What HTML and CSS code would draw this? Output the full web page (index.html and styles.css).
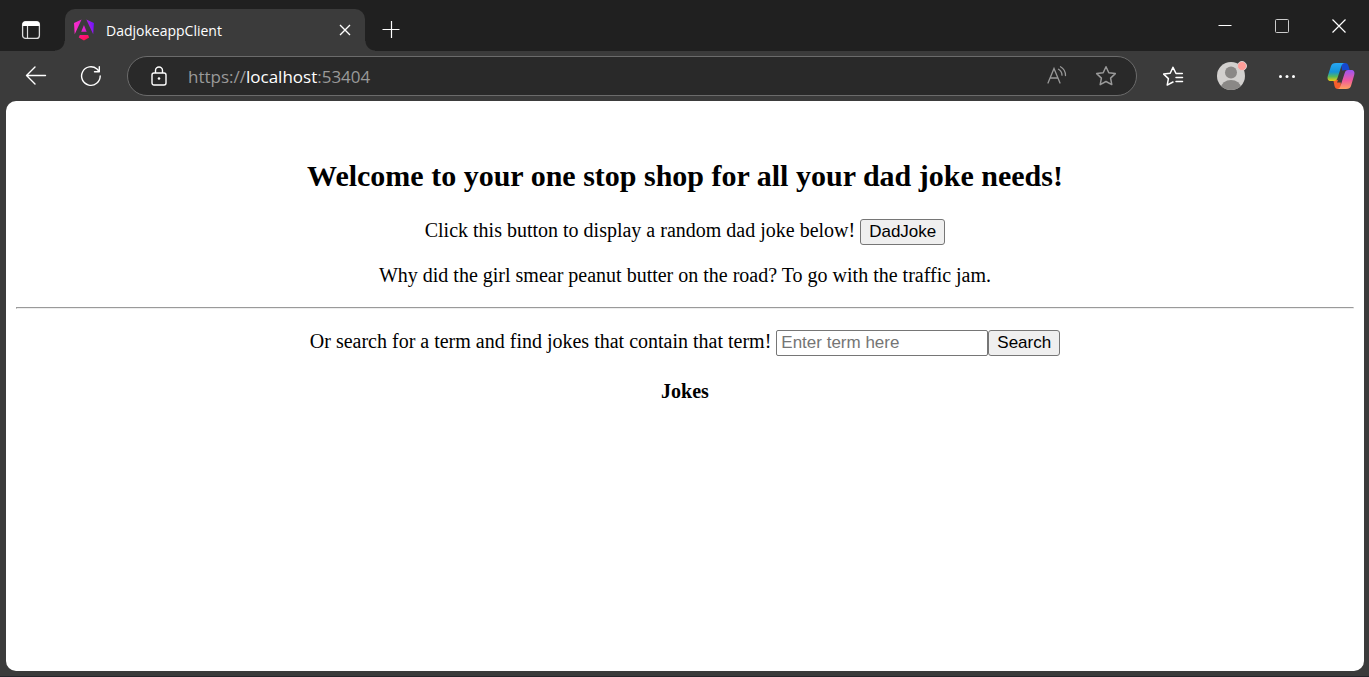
FILE: index.html
```html
<!DOCTYPE html>
<html lang="en">
<head>
<meta charset="utf-8">
<title>DadjokeappClient</title>
<link rel="stylesheet" href="styles.css">
</head>
<body>
<div class="window">
  <header class="tab-strip">
    <button class="icon-button tab-actions" aria-label="Tab actions">
      <svg width="20" height="20" viewBox="0 0 20 20" fill="none" stroke="#ddd"><rect x="1.6" y="1.6" width="16.8" height="16.8" rx="3" stroke-width="1.3"/><path d="M1.500 6V4.500a3 3 0 0 1 3-3h11a3 3 0 0 1 3 3V6z" fill="#fff" stroke="none"/><path d="M6.500 6v12" stroke-width="1.200"/></svg>
    </button>
    <div class="tab">
      <svg class="favicon" width="20" height="22" viewBox="0 0 223 236"><defs><linearGradient id="ng" gradientUnits="userSpaceOnUse" x1="0" y1="120" x2="223" y2="60"><stop offset="0" stop-color="#ff30c8"/><stop offset=".5" stop-color="#e01fd0"/><stop offset="1" stop-color="#6a14ff"/></linearGradient><linearGradient id="ngb" x1="0" y1="0" x2="1" y2="1"><stop offset="0" stop-color="#ff1494"/><stop offset="1" stop-color="#ff1040"/></linearGradient></defs><path fill="url(#ng)" d="m222.077 39.192-8.019 125.923L137.387 0l84.690 39.192ZM111.039 62.675l30.357 73.803H80.681l30.358-73.803ZM7.937 165.115 0 39.192 84.690 0 7.937 165.115Z"/><path fill="url(#ngb)" d="m168.972 202.017-57.933 33.056-57.934-33.056 11.783-28.556h92.301z"/></svg>
      <span class="tab-title">DadjokeappClient</span>
      <button class="icon-button" aria-label="Close tab"><svg width="12" height="12" viewBox="0 0 12 12" fill="none" stroke="#fff" stroke-width="1.400"><path d="m1 1 10 10M11 1 1 11"/></svg></button>
    </div>
    <button class="icon-button new-tab" aria-label="New tab"><svg width="18" height="18" viewBox="0 0 18 18" stroke="#fff" stroke-width="1.200"><path d="M0.500 8.500h17M9.500 0v17"/></svg></button>
    <div class="window-controls">
      <button class="icon-button" aria-label="Minimize"><svg width="14" height="14" viewBox="0 0 14 14" stroke="#fff"><path d="M0.500 6.500h13"/></svg></button>
      <button class="icon-button" aria-label="Maximize"><svg width="14" height="14" viewBox="0 0 14 14" fill="none" stroke="#ccc"><rect x="0.500" y="0.500" width="13" height="13" rx="1"/></svg></button>
      <button class="icon-button" aria-label="Close"><svg width="14" height="14" viewBox="0 0 14 14" stroke="#fff" stroke-width="1.200"><path d="m0.500 0.500 13 13M13.500 0.500l-13 13"/></svg></button>
    </div>
  </header>
  <nav class="toolbar">
    <div class="history">
      <button class="icon-button" aria-label="Back"><svg width="22" height="20" viewBox="0 0 22 20" fill="none" stroke="#fff" stroke-width="1.400" stroke-linecap="round" stroke-linejoin="round"><path d="M20.500 9.500H1.500M10 1 1.500 9.500 10 18"/></svg></button>
      <button class="icon-button" aria-label="Refresh"><svg width="22" height="22" viewBox="0 0 22 22" fill="none" stroke="#fff" stroke-width="1.400" stroke-linecap="round" stroke-linejoin="round"><path d="M20.200 11a9.300 9.300 0 1 1-3.200-7l2.200 2.600M19.300 1.800v5H14.500"/></svg></button>
    </div>
    <div class="address-bar">
      <svg width="16" height="20" viewBox="0 0 16 20" fill="none" stroke="#fff" stroke-width="1.400"><rect x="1" y="7" width="14" height="12" rx="2"/><path d="M4.500 7V4.500a3.500 3.500 0 0 1 7 0V7"/><circle cx="8" cy="12.500" r="1.300" fill="#fff" stroke="none"/></svg>
      <span class="url">https://<span class="host">localhost</span>:53404</span>
      <button class="icon-button" aria-label="Read aloud"><svg width="20" height="20" viewBox="0 0 20 20" fill="none" stroke="#999" stroke-width="1.300" stroke-linecap="round"><path d="M1 17 7 2.500 13 17M3.200 12h7.600M11.500 3.200a7 7 0 0 1 3.500 6M13.500 .800a10 10 0 0 1 5 8.700"/></svg></button>
      <button class="icon-button" aria-label="Add to favorites"><svg width="22" height="22" viewBox="0 0 22 22" fill="none" stroke="#999" stroke-width="1.500" stroke-linejoin="round"><path d="m11 1.800 2.800 5.900 6.500.9-4.700 4.500 1.200 6.500-5.800-3.100-5.800 3.100 1.200-6.500L1.700 8.600l6.500-.9z"/></svg></button>
    </div>
    <div class="toolbar-actions">
      <button class="icon-button" aria-label="Favorites"><svg width="22" height="22" viewBox="0 0 22 22" fill="none" stroke="#fff" stroke-width="1.500" stroke-linejoin="round" stroke-linecap="round"><path d="M20.300 8.500H14L11 2.300 8.200 8.200l-6.500.9 4.700 4.500-1.200 6.500 5.800-3.100M14 12.500h6.500M14 16.500h6.500"/></svg></button>
      <button class="icon-button" aria-label="Profile"><svg width="32" height="32" viewBox="0 0 32 32"><defs><clipPath id="head"><circle cx="16" cy="16" r="14"/></clipPath></defs><circle cx="16" cy="16" r="14" fill="#d2d0ce"/><g fill="#8a8886" clip-path="url(#head)"><circle cx="16" cy="12.500" r="6"/><ellipse cx="16" cy="28" rx="10" ry="8"/></g><circle cx="27" cy="6" r="4.500" fill="#ff9d98" stroke="#d8d0ce"/></svg></button>
      <button class="icon-button" aria-label="Settings and more"><svg width="18" height="6" viewBox="0 0 18 6" fill="#fff"><circle cx="2.500" cy="3.500" r="1.500"/><circle cx="9" cy="3.500" r="1.500"/><circle cx="15.500" cy="3.500" r="1.500"/></svg></button>
      <button class="icon-button" aria-label="Copilot"><svg width="28" height="28" viewBox="0 0 28 28"><defs><linearGradient id="cpl" x1="0" y1="0" x2="0" y2="1"><stop offset="0" stop-color="#28a8f5"/><stop offset=".5" stop-color="#1493d8"/><stop offset=".75" stop-color="#56b85e"/><stop offset="1" stop-color="#f0cc10"/></linearGradient><linearGradient id="cpr" x1="0" y1="0" x2="0" y2="1"><stop offset="0" stop-color="#9a55f5"/><stop offset=".55" stop-color="#f05a9d"/><stop offset="1" stop-color="#ffa35e"/></linearGradient></defs><path d="M14 1h4c2 0 3 1 3.500 3l1.200 4H19c-2 0-3 .8-3.500 3z" fill="#1648cf"/><path d="M14 27h-3c-2 0-3-1-3.500-3l-1.200-6H10c2 0 3-1 3.500-3z" fill="#f55e2c"/><path d="M14.800 8.500h4L14 20.500h-4z" fill="#3b3b3b"/><path d="M9 1h9c-2 0-3.100 1.500-3.600 3L10.500 16c-.7 2-1.500 3-3.500 3H4c-3 0-4-2-3.200-5L4 4c.7-2 2-3 5-3z" fill="url(#cpl)"/><path d="M19 27h-9c2 0 3-1.500 3.500-3L17.700 11c.6-2 1.500-3 3.500-3H24c3 0 4 2 3.200 5L24 24c-.7 2-2 3-5 3z" fill="url(#cpr)"/></svg></button>
    </div>
  </nav>
  <main class="page">
    <h2 class="heading">Welcome to your one stop shop for all your dad joke needs!</h2>
    <div class="line">Click this button to display a random dad joke below! <button class="control button">DadJoke</button></div>
    <p class="joke">Why did the girl smear peanut butter on the road? To go with the traffic jam.</p>
    <hr class="rule">
    <form class="line search" onsubmit="return false"><label for="term">Or search for a term and find jokes that contain that term!</label> <input class="control term" id="term" type="text" placeholder="Enter term here"><button class="control button">Search</button></form>
    <h4 class="subheading">Jokes</h4>
  </main>
</div>
</body>
</html>
```
FILE: styles.css
```css
* { box-sizing: border-box; }
body { margin: 0; background: #3b3b3b; }
.window {
  min-height: 100vh;
  display: flex;
  flex-direction: column;
  padding: 0 5px 5px 6px;
  background: #3b3b3b;
  border-bottom: 1px solid #25252b;
}
.icon-button {
  display: flex;
  flex: none;
  align-items: center;
  justify-content: center;
  padding: 0;
  border: 0;
  background: none;
}
.tab-strip {
  display: flex;
  height: 51px;
  margin: 0 -5px 0 -6px;
  background: #202020;
  font-family: "Open Sans", "Noto Sans", sans-serif;
}
.tab-actions {
  width: 65px;
  padding: 9px 3px 0 0;
}
.tab {
  position: relative;
  display: flex;
  align-items: center;
  width: 300px;
  height: 42px;
  margin-top: 9px;
  padding: 0 14px 0 9px;
  border-radius: 10px 10px 0 0;
  background: #3b3b3b;
}
.tab::before, .tab::after {
  content: "";
  position: absolute;
  bottom: 0;
  width: 10px;
  height: 10px;
}
.tab::before { right: 100%; background: radial-gradient(circle at 0 0, #202020 9px, #3b3b3b 10px); }
.tab::after { left: 100%; background: radial-gradient(circle at 100% 0, #202020 9px, #3b3b3b 10px); }
.tab-title {
  flex: 1;
  margin-left: 12px;
  color: #fff;
  font-size: 14px;
}
.new-tab { width: 52px; padding-top: 9px; }
.window-controls {
  display: flex;
  gap: 43px;
  margin-left: auto;
  padding-right: 23px;
}
.toolbar {
  display: flex;
  align-items: center;
  height: 50px;
  padding-left: 19px;
  gap: 25px;
}
.history {
  display: flex;
  align-items: center;
  gap: 33px;
}
.address-bar {
  flex: 1;
  display: flex;
  align-items: center;
  gap: 28px;
  height: 40px;
  padding: 0 19px 0 23px;
  border: 1px solid #6b6b6b;
  border-radius: 20px;
  background: #292929;
}
.url {
  flex: 1;
  margin-left: -7px;
  color: #999;
  font-family: "Open Sans", "Noto Sans", sans-serif;
  font-size: 17px;
}
.host { color: #fff; }
.toolbar-actions {
  display: flex;
  align-items: center;
  gap: 31px;
  padding-right: 9px;
}
.page {
  flex: 1;
  padding: 58px 10px 10px;
  border-radius: 10px;
  background: #fff;
  color: #000;
  font-family: "Liberation Serif", "Times New Roman", serif;
  font-size: 20px;
  text-align: center;
}
.heading { margin: 0 0 24px; font-size: 30px; line-height: 34px; }
.line { line-height: 26px; }
.joke { margin: 19px 0 20px; line-height: 23px; }
.rule { margin: 0 0 19px; }
.control {
  height: 26px;
  border: 1px solid #767676;
  font-family: "Liberation Sans", Arial, sans-serif;
  font-size: 17px;
  color: #000;
}
.button { padding: 0 8px; border-radius: 3px; background: #efefef; }
.term { width: 212px; padding: 0 4px; border-radius: 2px; background: #fff; }
.term::placeholder { color: #757575; }
.subheading { margin: 24px 0 0; font-size: 20px; line-height: 23px; }
```
